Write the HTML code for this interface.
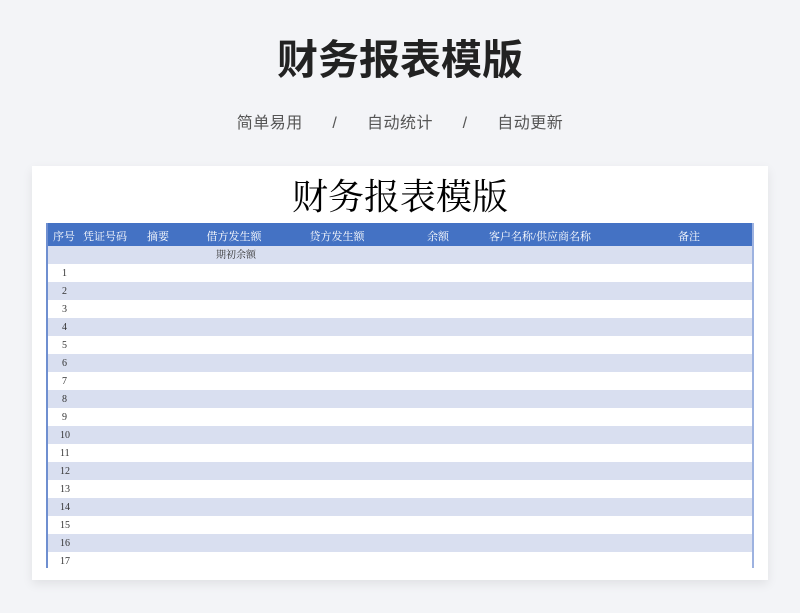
<!DOCTYPE html>
<html><head><meta charset="utf-8"><style>
*{margin:0;padding:0;box-sizing:border-box}
body{width:800px;height:613px;background:#f3f4f7;font-family:"Liberation Sans","Noto Sans CJK SC",sans-serif;position:relative;overflow:hidden}
.t{position:absolute;left:0;width:800px;text-align:center}
#h1{top:33px;font-size:41px;font-weight:bold;color:#222;line-height:54px}
#sub{top:113px;font-size:16px;color:#555;line-height:22px;letter-spacing:0.5px}
#card{position:absolute;left:32px;top:166px;width:736px;height:414px;background:#fff;box-shadow:0 4px 10px rgba(0,0,0,.08)}
#h2{position:absolute;top:175px;left:0;width:800px;text-align:center;font-size:36px;line-height:44px;color:#000;font-family:"Liberation Serif","Noto Serif CJK SC",serif}
#tbl{position:absolute;left:46px;top:223px;width:708px;height:345px;border-left:2px solid #6f8fd0;border-right:2px solid #9db2e0;overflow:hidden}
.hd{height:23px;background:#4472c4;color:#fff;font-size:11px;position:relative;font-family:"Liberation Serif","Noto Serif CJK SC",serif}
.hd span{position:absolute;top:5px;transform:translateX(-50%);white-space:nowrap}
.r{height:18px;position:relative;font-size:10px;color:#333;font-family:"Liberation Serif","Noto Serif CJK SC",serif;line-height:20px}
.b{background:#d9dff0}
.r span{position:absolute}
</style></head><body>
<div class="t" id="h1">财务报表模版</div>
<div class="t" id="sub">简单易用&nbsp;&nbsp;&nbsp;&nbsp;&nbsp;&nbsp;/&nbsp;&nbsp;&nbsp;&nbsp;&nbsp;&nbsp;自动统计&nbsp;&nbsp;&nbsp;&nbsp;&nbsp;&nbsp;/&nbsp;&nbsp;&nbsp;&nbsp;&nbsp;&nbsp;自动更新</div>
<div id="card"></div>
<div id="h2">财务报表模版</div>
<div id="tbl">
<div class="hd"><span style="left:16px">序号</span><span style="left:57px">凭证号码</span><span style="left:110px">摘要</span><span style="left:186px">借方发生额</span><span style="left:289px">贷方发生额</span><span style="left:390px">余额</span><span style="left:492px">客户名称/供应商名称</span><span style="left:641px">备注</span></div>
<div class="r b"><span style="left:168px">期初余额</span></div>
<div class="r"><span style="left:14px">1</span></div>
<div class="r b"><span style="left:14px">2</span></div>
<div class="r"><span style="left:14px">3</span></div>
<div class="r b"><span style="left:14px">4</span></div>
<div class="r"><span style="left:14px">5</span></div>
<div class="r b"><span style="left:14px">6</span></div>
<div class="r"><span style="left:14px">7</span></div>
<div class="r b"><span style="left:14px">8</span></div>
<div class="r"><span style="left:14px">9</span></div>
<div class="r b"><span style="left:12px">10</span></div>
<div class="r"><span style="left:12px">11</span></div>
<div class="r b"><span style="left:12px">12</span></div>
<div class="r"><span style="left:12px">13</span></div>
<div class="r b"><span style="left:12px">14</span></div>
<div class="r"><span style="left:12px">15</span></div>
<div class="r b"><span style="left:12px">16</span></div>
<div class="r"><span style="left:12px">17</span></div>
</div>
</body></html>
